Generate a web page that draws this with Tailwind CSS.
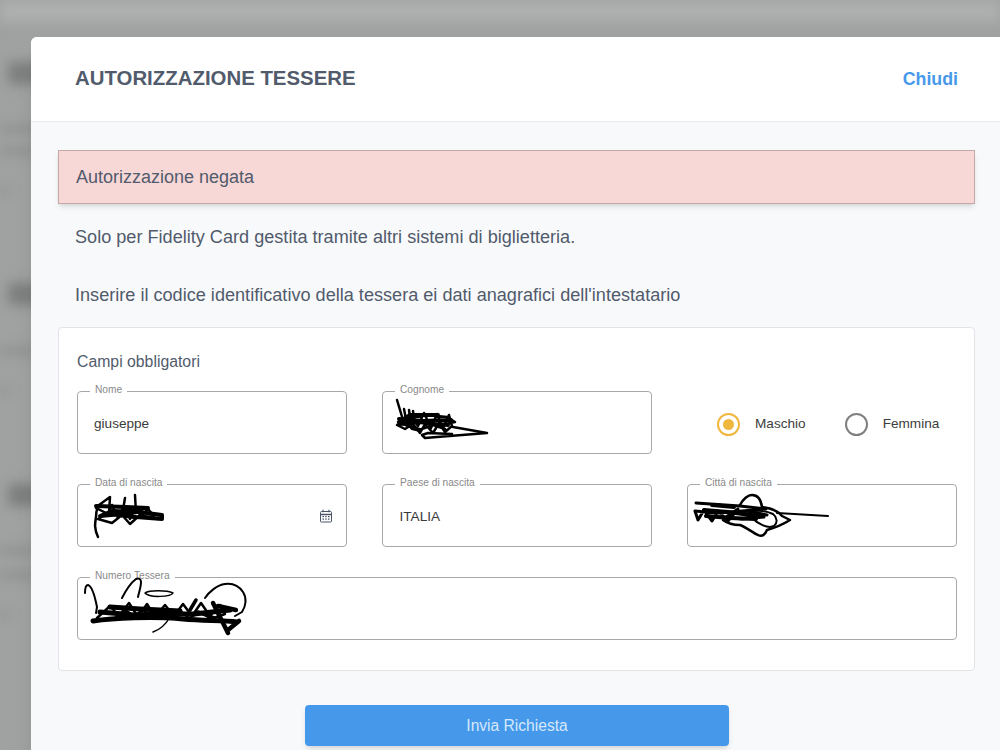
<!DOCTYPE html>
<html lang="it">
<head>
    <meta charset="UTF-8">
    <title>Autorizzazione Tessere</title>
    <script src="https://cdn.jsdelivr.net/npm/@tailwindcss/browser@4"></script>
</head>
<body class="relative h-[750px] overflow-hidden bg-[#a0a1a1] font-['Liberation_Sans',Arial,sans-serif] text-[#515b6c]">
    <!-- Blurred page behind the modal -->
    <div class="absolute inset-0 blur-[6px]">
        <div class="absolute left-0 top-0 h-[22px] w-full bg-[#aeafaf]"></div>
        <div class="absolute left-[8px] top-[62px] h-[22px] w-[40px] bg-[#7d7e7e]"></div>
        <div class="absolute left-0 top-[126px] h-[6px] w-[40px] bg-[#8a8b8b]"></div>
        <div class="absolute left-0 top-[148px] h-[6px] w-[40px] bg-[#8a8b8b]"></div>
        <div class="absolute left-0 top-[188px] h-[6px] w-[8px] bg-[#8a8b8b]"></div>
        <div class="absolute left-[8px] top-[283px] h-[22px] w-[40px] bg-[#7d7e7e]"></div>
        <div class="absolute left-0 top-[348px] h-[6px] w-[40px] bg-[#8a8b8b]"></div>
        <div class="absolute left-0 top-[388px] h-[6px] w-[8px] bg-[#8a8b8b]"></div>
        <div class="absolute left-[8px] top-[484px] h-[22px] w-[40px] bg-[#7d7e7e]"></div>
        <div class="absolute left-0 top-[548px] h-[6px] w-[40px] bg-[#8a8b8b]"></div>
        <div class="absolute left-0 top-[572px] h-[6px] w-[40px] bg-[#8a8b8b]"></div>
        <div class="absolute left-0 top-[612px] h-[6px] w-[8px] bg-[#8a8b8b]"></div>
    </div>

    <!-- Modal -->
    <div class="relative ml-[31px] mt-[37px] h-[760px] w-[1000px] rounded-tl-md bg-[#f8f9fb] shadow-xl">
        <header class="flex h-[85px] w-[969px] items-center justify-between rounded-tl-md border-b border-[#e8ecf1] bg-white pl-[44px] pr-[42px]">
            <h1 class="-mt-[2px] text-[20.4px] font-bold">AUTORIZZAZIONE TESSERE</h1>
            <button class="text-[17.8px] font-bold text-[#4699ea]">Chiudi</button>
        </header>

        <div class="w-[944px] pl-[27px] pt-[28px]">
            <div class="flex h-[54px] items-center border border-[#c5a9a9] bg-[#f8d7d7] pl-[17px] text-[18px] shadow-md">Autorizzazione negata</div>
            <p class="mt-[22px] pl-[17px] text-[18.12px] leading-[22px]">Solo per Fidelity Card gestita tramite altri sistemi di biglietteria.</p>
            <p class="mt-[36px] pl-[17px] text-[18.12px] leading-[22px]">Inserire il codice identificativo della tessera ei dati anagrafici dell'intestatario</p>

            <div class="mt-[21px] h-[344px] rounded border border-[#e2e4e8] bg-white pl-[18px] pr-[17px] pt-[24px]">
                <h2 class="text-[15.8px] leading-[20px]">Campi obbligatori</h2>

                <div class="mt-[19px] grid grid-cols-3 gap-x-[35px] gap-y-[30px]">
                    <div class="relative flex h-[63px] items-center rounded border-[1.5px] border-[#a8a8a8] pl-[16px] pt-[4px] text-[13.6px] text-[#3a3a3a]">
                        <span class="absolute left-[12px] top-[-9px] bg-white px-[5px] text-[10.2px] leading-[14px] text-[#8a8a8a]">Nome</span>
                        giuseppe
                    </div>
                    <div class="relative h-[63px] rounded border-[1.5px] border-[#a8a8a8]">
                        <span class="absolute left-[12px] top-[-9px] bg-white px-[5px] text-[10.2px] leading-[14px] text-[#8a8a8a]">Cognome</span>
                        <svg class="absolute left-0 top-0" width="110" height="55" viewBox="383 392 110 55" fill="none" stroke="#000" stroke-linecap="round" stroke-linejoin="round">
                            <path stroke-width="2.5" d="M397 400l6 20M404 409l3 15M409 410l2 14M413 411l2 12"/>
                            <path stroke-width="2.5" d="M398 422l12-8 8 12 6-13 7 15 6-14 6 14 6-13 3 11-7 6-6-9-6 10-8-9-5 9-7-9-8 5-8-4 10-7 20-3 20 2 8 5-14 3-20-3-18 2 16 6 14-5 12 4"/>
                            <path stroke-width="4" d="M399 419l24 2 28-1M400 424l18-2 30 3M410 415l28 0M412 428l8 2"/>
                            <path stroke-width="2.5" d="M453 427l34 6-50 4-12 1-3-3 6-2 24 1"/>
                        </svg>
                    </div>
                    <div class="flex h-[63px] items-center pl-[30px] pt-[3px] text-[13.6px] text-[#3d3d3d]">
                        <span class="flex h-[23px] w-[23px] items-center justify-center rounded-full border-2 border-[#f0b73e]"><span class="h-[11px] w-[11px] rounded-full bg-[#f0b73e]"></span></span>
                        <span class="ml-[15px]">Maschio</span>
                        <span class="ml-[39px] h-[23px] w-[23px] rounded-full border-2 border-[#7f7f7f]"></span>
                        <span class="ml-[15px]">Femmina</span>
                    </div>

                    <div class="relative flex h-[63px] items-center rounded border-[1.5px] border-[#a8a8a8]">
                        <span class="absolute left-[12px] top-[-9px] bg-white px-[5px] text-[10.2px] leading-[14px] text-[#8a8a8a]">Data di nascita</span>
                        <svg class="absolute left-0 top-0" width="100" height="60" viewBox="78 485 100 60" fill="none" stroke="#000" stroke-linecap="round" stroke-linejoin="round">
                            <path stroke-width="2.5" d="M98 537c-4-8-3-14-2-20 0-6 1-9 3-12l11-8-1 16M125 498l-3 18M135 495l1 18"/>
                            <path stroke-width="2.5" d="M96 508l12 6 4-9 6 13 6-12 6 13 5-11 6 8 7-7 6 7-18 2-30-4-8 5 14 4 10-8 8 9 10-9 18 4"/>
                            <path stroke-width="4" d="M96 506l30 1 22 1-24 2 38 5 0 4-26-2-14-3-22 2 12-5 30 1"/>
                        </svg>
                        <svg class="ml-auto mr-[13px] mt-[1px]" width="14" height="14" viewBox="0 0 14 14" fill="none" stroke="#4a5568">
                            <rect x="1.5" y="2.5" width="11" height="10.5" rx="1"/>
                            <path d="M1.5 5.5h11" stroke-width="1.5"/>
                            <path d="M4 .8v2.4M10 .8v2.4" stroke-width="1.2"/>
                            <path d="M3.5 7.7h1.5M6.2 7.7h1.5M9 7.7h1.5M3.5 10.2h1.5M6.2 10.2h1.5M9 10.2h1.5" stroke-width="1.2"/>
                        </svg>
                    </div>
                    <div class="relative flex h-[63px] items-center rounded border-[1.5px] border-[#a8a8a8] pl-[16.5px] pt-[3px] text-[13.6px] text-[#3a3a3a]">
                        <span class="absolute left-[12px] top-[-9px] bg-white px-[5px] text-[10.2px] leading-[14px] text-[#8a8a8a]">Paese di nascita</span>
                        ITALIA
                    </div>
                    <div class="relative h-[63px] rounded border-[1.5px] border-[#a8a8a8]">
                        <span class="absolute left-[12px] top-[-9px] bg-white px-[5px] text-[10.2px] leading-[14px] text-[#8a8a8a]">Città di nascita</span>
                        <svg class="absolute left-0 top-0" width="145" height="60" viewBox="688 485 145 60" fill="none" stroke="#000" stroke-linecap="round" stroke-linejoin="round">
                            <path stroke-width="2" d="M777 513l51 3"/>
                            <path stroke-width="2.5" d="M740 505c3-6 8-10 12-10 6 0 9 5 10 12 8 1 16 4 20 9l8 4c-8 5-16 8-23 10-2 5-5 7-9 5-5-2-12-8-18-10-6 0-13-2-17-5"/>
                            <path stroke-width="2" d="M745 512c8-2 20-2 28 2 4 3 5 9 1 12-6 3-16-2-22-8"/>
                            <path stroke-width="3" d="M696 503l44 3 26 3-36 3 34 5-22 2-16-2 12-8-10 12-10-10-6 10-8-11-6 10-3-9 22 2 30-2 20 4"/>
                            <path stroke-width="4" d="M704 510l24 2 30 4M706 516l24 2 26 1M712 505l22 2"/>
                        </svg>
                    </div>

                    <div class="relative col-span-3 h-[63px] rounded border-[1.5px] border-[#a8a8a8]">
                        <span class="absolute left-[12px] top-[-9px] bg-white px-[5px] text-[10.2px] leading-[14px] text-[#8a8a8a]">Numero Tessera</span>
                        <svg class="absolute left-0 top-[-8px]" width="180" height="70" viewBox="78 570 180 70" fill="none" stroke="#000" stroke-linecap="round" stroke-linejoin="round">
                            <path stroke-width="2" d="M85 593c0-5 1-8 3-8 4 1 7 12 9 22l-1 6M122 598c4-8 10-16 14-19 3-1 5 0 5 3 0 5-2 10-3 15"/>
                            <path stroke-width="1.5" d="M145 593c4-3 22-3 28 0-2 4-24 5-28 0z"/>
                            <path stroke-width="2" d="M205 598c4-6 12-13 20-14 8-1 14 2 18 8 4 6 3 14-1 20l-7 4"/>
                            <path stroke-width="1.5" d="M153 632c6-2 13-8 17-15"/>
                            <path stroke-width="2.5" d="M97 618l13-12 9 10 10-13 9 14 9-13 8 13 10-12 9 11 9-12 9 12 9-13 9 13 10-11 5 9-14 5-10-7-12 6-10-8-9 7-9-7-10 7-8-7-9 6-9-6-9 7"/>
                            <path stroke-width="5" d="M93 621c20-3 60-5 90-2 22 2 40 1 54 3"/>
                            <path stroke-width="5" d="M100 612l34 3 30-1 30 0 36-4M110 607l30 2 40 2"/>
                            <path stroke-width="4.5" d="M213 603l15 30M228 630l11-9M218 606l18 4"/>
                            <path stroke-width="3.5" d="M190 610l6-10M198 612l16 6"/>
                        </svg>
                    </div>
                </div>
            </div>

            <div class="mt-[34px] flex justify-center pl-[1px]">
                <button class="h-[41px] w-[424px] rounded bg-[#4699ea] text-[15.6px] text-[#d5e8fa] shadow-md">Invia Richiesta</button>
            </div>
        </div>
    </div>
</body>
</html>
